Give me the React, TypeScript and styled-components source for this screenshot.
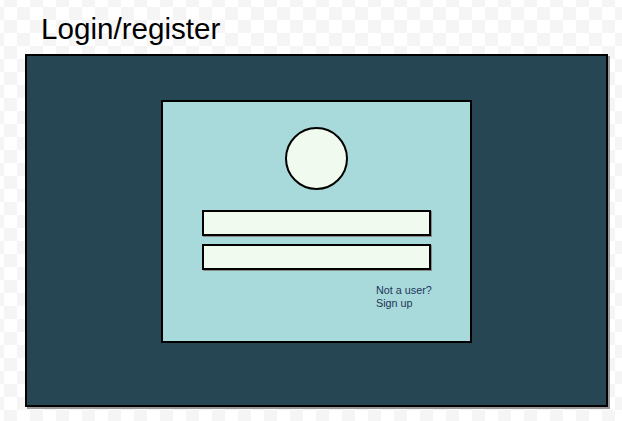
import React from "react";
import styled, { createGlobalStyle } from "styled-components";

const Global = createGlobalStyle`
  html, body {
    margin: 0;
    padding: 0;
  }
  body {
    width: 622px;
    height: 421px;
    overflow: hidden;
    font-family: "Liberation Sans", Arial, sans-serif;
    background-color: #ffffff;
    background-image:
      linear-gradient(45deg, #f5f5f5 25%, transparent 25%, transparent 75%, #f5f5f5 75%),
      linear-gradient(45deg, #f5f5f5 25%, transparent 25%, transparent 75%, #f5f5f5 75%);
    background-size: 26px 26px;
    background-position: 4px 7px, 17px 20px;
  }
`;

const Page = styled.div`
  display: flex;
  flex-direction: column;
  padding: 11px 0 0 25px;
`;

const Title = styled.h1`
  margin: 0 0 8px 16px;
  font-size: 29.6px;
  font-weight: 400;
  line-height: 35px;
  color: #000;
`;

const Frame = styled.div`
  box-sizing: border-box;
  width: 583px;
  height: 353px;
  background: #264653;
  border: 2px solid #000;
  box-shadow: 2px 2px 0 #9a9a9a;
  display: flex;
  justify-content: center;
  padding-top: 44px;
`;

const Panel = styled.div`
  box-sizing: border-box;
  width: 311px;
  height: 243px;
  background: #a8dadc;
  border: 2px solid #000;
  display: flex;
  flex-direction: column;
  align-items: center;
  padding-top: 25px;
`;

const Avatar = styled.div`
  box-sizing: border-box;
  width: 63px;
  height: 63px;
  border-radius: 50%;
  background: #f1faee;
  border: 2px solid #000;
  margin-bottom: 20px;
`;

const Field = styled.div`
  box-sizing: border-box;
  width: 229px;
  height: 26px;
  background: #f1faee;
  border: 2px solid #000;
  box-shadow: 1px 1px 0 #8a8a8a;
  & + & {
    margin-top: 8px;
  }
`;

const Hint = styled.div`
  align-self: flex-start;
  margin: 14px 0 0 213px;
  font-size: 10.8px;
  line-height: 13px;
  color: #1d3557;
`;

export default function App() {
  return (
    <>
      <Global />
      <Page>
        <Title>Login/register</Title>
        <Frame>
          <Panel>
            <Avatar />
            <Field />
            <Field />
            <Hint>
              Not a user?
              <br />
              Sign up
            </Hint>
          </Panel>
        </Frame>
      </Page>
    </>
  );
}
